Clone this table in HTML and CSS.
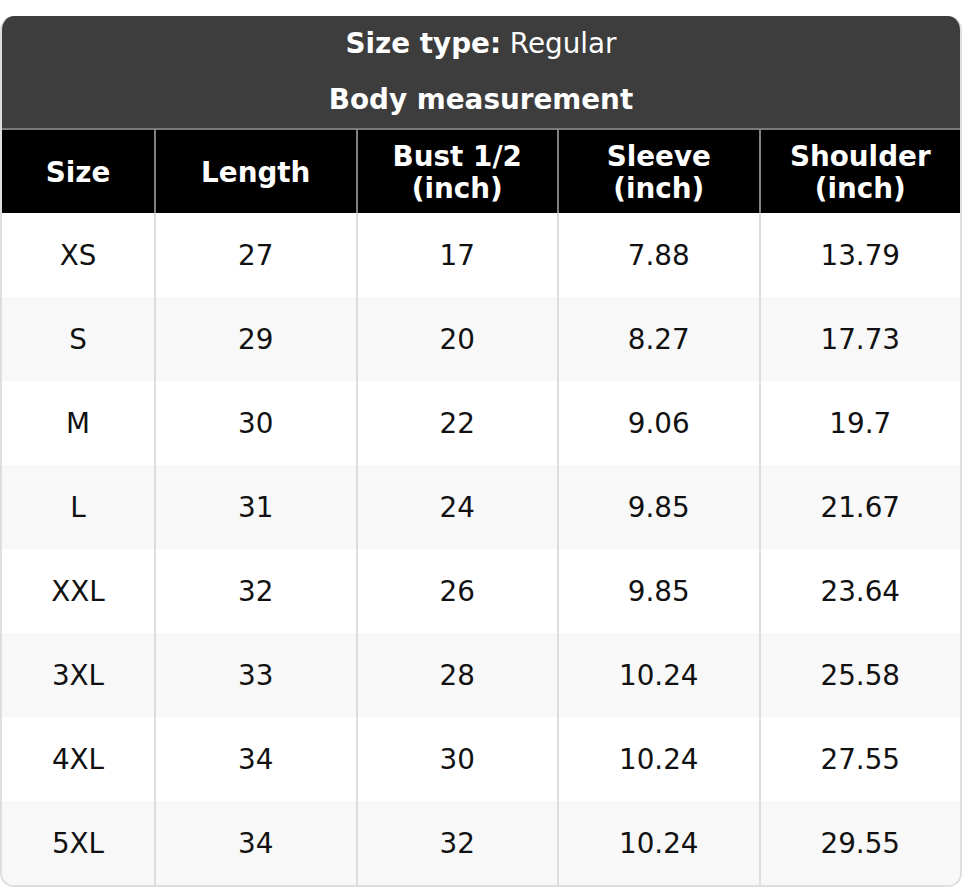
FILE: index.html
```html
<!DOCTYPE html>
<html>
<head>
<meta charset="utf-8">
<link rel="stylesheet" href="styles.css">
</head>
<body>
<div class="card">
  <div class="title">
    <div class="title-line"><b>Size type:</b> Regular</div>
    <div class="title-line"><b>Body measurement</b></div>
  </div>
  <table class="chart">
    <colgroup>
      <col class="c-size"><col><col><col><col>
    </colgroup>
    <thead>
      <tr>
        <th>Size</th>
        <th>Length</th>
        <th>Bust 1/2<br>(inch)</th>
        <th>Sleeve<br>(inch)</th>
        <th>Shoulder<br>(inch)</th>
      </tr>
    </thead>
    <tbody>
      <tr><td>XS</td><td>27</td><td>17</td><td>7.88</td><td>13.79</td></tr>
      <tr><td>S</td><td>29</td><td>20</td><td>8.27</td><td>17.73</td></tr>
      <tr><td>M</td><td>30</td><td>22</td><td>9.06</td><td>19.7</td></tr>
      <tr><td>L</td><td>31</td><td>24</td><td>9.85</td><td>21.67</td></tr>
      <tr><td>XXL</td><td>32</td><td>26</td><td>9.85</td><td>23.64</td></tr>
      <tr><td>3XL</td><td>33</td><td>28</td><td>10.24</td><td>25.58</td></tr>
      <tr><td>4XL</td><td>34</td><td>30</td><td>10.24</td><td>27.55</td></tr>
      <tr><td>5XL</td><td>34</td><td>32</td><td>10.24</td><td>29.55</td></tr>
    </tbody>
  </table>
</div>
</body>
</html>
```
FILE: styles.css
```css
html, body {
  margin: 0;
  padding: 0;
  background: #fff;
}
body {
  padding-top: 16px;
  font-family: "DejaVu Sans", Verdana, sans-serif;
  font-size: 27.8px;
  color: #111;
}
.card {
  width: 962px;
  box-sizing: border-box;
  border: 2px solid #dedede;
  border-top: none;
  border-radius: 14px;
  overflow: hidden;
}
.title {
  background: #3d3d3d;
  color: #fff;
  text-align: center;
}
.title-line {
  height: 56px;
  line-height: 56px;
}
.chart {
  width: 100%;
  table-layout: fixed;
  border-collapse: separate;
  border-spacing: 0;
}
.c-size {
  width: 152px;
}
.chart th {
  background: #000;
  color: #fff;
  font-weight: bold;
  border-top: 2px solid #7a7a7a;
  border-left: 2px solid #808080;
  padding: 11px 4px 9px;
  line-height: 31.5px;
  vertical-align: middle;
}
.chart td {
  border-left: 2px solid #dddddd;
  padding: 27px 4px 25px;
  line-height: 32px;
  text-align: center;
  vertical-align: middle;
}
.chart th:first-child,
.chart td:first-child {
  border-left: none;
}
.chart tbody tr:nth-child(even) td {
  background: #f8f8f8;
}
```
